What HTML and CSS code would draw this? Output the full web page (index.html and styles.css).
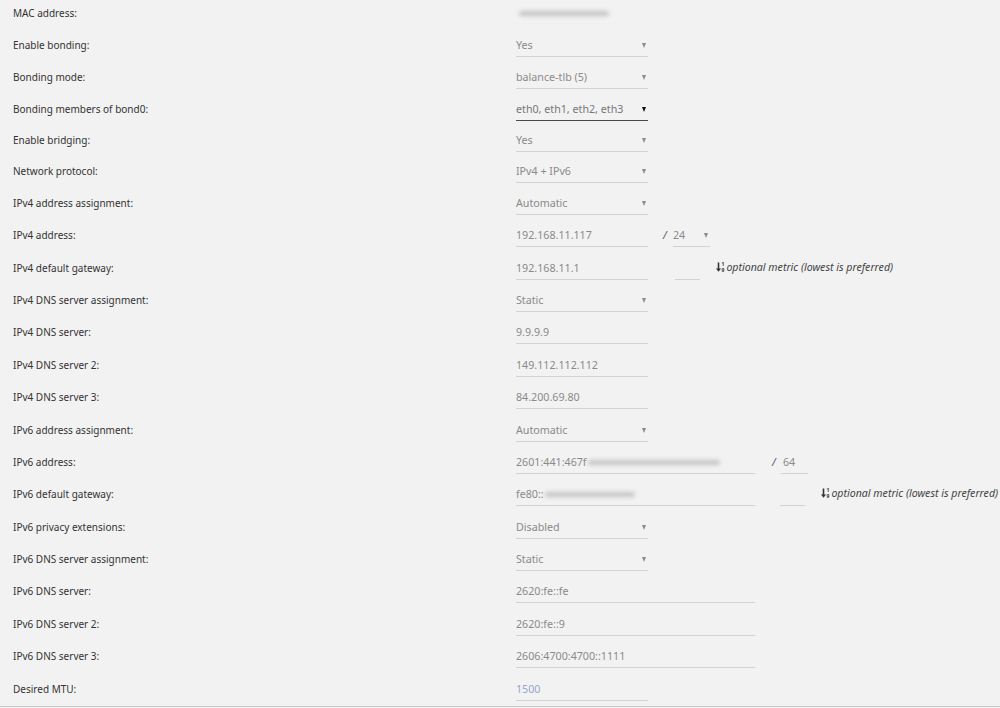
FILE: index.html
```html
<!DOCTYPE html>
<html>
<head>
<meta charset="utf-8">
<link rel="stylesheet" href="styles.css">
</head>
<body>
<div class="form">
  <div class="row"><div class="label">MAC address:</div><div class="plain"><span class="blur blur-mac"></span></div></div>
  <div class="row"><div class="label">Enable bonding:</div><div class="field sel">Yes<span class="caret"></span></div></div>
  <div class="row"><div class="label">Bonding mode:</div><div class="field sel">balance-tlb (5)<span class="caret"></span></div></div>
  <div class="row r31"><div class="label">Bonding members of bond0:</div><div class="field sel active">eth0, eth1, eth2, eth3<span class="caret"></span></div></div>
  <div class="row r31"><div class="label">Enable bridging:</div><div class="field sel">Yes<span class="caret"></span></div></div>
  <div class="row"><div class="label">Network protocol:</div><div class="field sel">IPv4 + IPv6<span class="caret"></span></div></div>
  <div class="row"><div class="label">IPv4 address assignment:</div><div class="field sel">Automatic<span class="caret"></span></div></div>
  <div class="row r33"><div class="label">IPv4 address:</div><div class="field">192.168.11.117</div><span class="slash s4">/</span><div class="field sel prefix4">24<span class="caret"></span></div></div>
  <div class="row"><div class="label">IPv4 default gateway:</div><div class="field">192.168.11.1</div><div class="field metric4"></div><div class="hint h4"><span class="sorticon"><svg width="5" height="10" viewBox="0 0 5 10"><path d="M2.5 0.5V8" stroke="#333" stroke-width="1.6"/><path d="M0 6.5h5L2.5 9.8z" fill="#333"/></svg><span class="digits"><span>1</span><span>9</span></span></span><i>optional metric (lowest is preferred)</i></div></div>
  <div class="row"><div class="label">IPv4 DNS server assignment:</div><div class="field sel">Static<span class="caret"></span></div></div>
  <div class="row r33"><div class="label">IPv4 DNS server:</div><div class="field">9.9.9.9</div></div>
  <div class="row"><div class="label">IPv4 DNS server 2:</div><div class="field">149.112.112.112</div></div>
  <div class="row r33"><div class="label">IPv4 DNS server 3:</div><div class="field">84.200.69.80</div></div>
  <div class="row"><div class="label">IPv6 address assignment:</div><div class="field sel">Automatic<span class="caret"></span></div></div>
  <div class="row"><div class="label">IPv6 address:</div><div class="field wide">2601:441:467f<span class="blur blur-v6"></span></div><span class="slash s6">/</span><div class="field prefix6">64</div></div>
  <div class="row r33"><div class="label">IPv6 default gateway:</div><div class="field wide">fe80::<span class="blur blur-gw"></span></div><div class="field metric6"></div><div class="hint h6"><span class="sorticon"><svg width="5" height="10" viewBox="0 0 5 10"><path d="M2.5 0.5V8" stroke="#333" stroke-width="1.6"/><path d="M0 6.5h5L2.5 9.8z" fill="#333"/></svg><span class="digits"><span>1</span><span>9</span></span></span><i>optional metric (lowest is preferred)</i></div></div>
  <div class="row"><div class="label">IPv6 privacy extensions:</div><div class="field sel">Disabled<span class="caret"></span></div></div>
  <div class="row"><div class="label">IPv6 DNS server assignment:</div><div class="field sel">Static<span class="caret"></span></div></div>
  <div class="row r33"><div class="label">IPv6 DNS server:</div><div class="field wide">2620:fe::fe</div></div>
  <div class="row"><div class="label">IPv6 DNS server 2:</div><div class="field wide">2620:fe::9</div></div>
  <div class="row r33"><div class="label">IPv6 DNS server 3:</div><div class="field wide">2606:4700:4700::1111</div></div>
  <div class="row"><div class="label">Desired MTU:</div><div class="field placeholder">1500</div></div>
</div>
</body>
</html>
```
FILE: styles.css
```css
html, body {
  margin: 0;
  padding: 0;
  background: #f2f2f2;
  height: 708px;
  overflow: hidden;
}
body {
  font-family: "Noto Sans", "Open Sans", sans-serif;
  font-size: 10.5px;
  color: #333;
}
.form {
  border-bottom: 1px solid #c9c9c9;
  box-sizing: border-box;
  height: 707px;
}
.row {
  display: flex;
  align-items: flex-start;
  height: 32px;
  padding-top: 2px;
  box-sizing: border-box;
  padding-left: 13px;
}
.row.r31 { height: 31px; }
.row.r33 { height: 33px; }
.label {
  width: 503px;
  flex: none;
  padding-top: 4px;
  line-height: 14px;
  font-size: 10px;
  color: #333;
}
.plain {
  padding-top: 4px;
  line-height: 14px;
  height: 14px;
  display: flex;
  align-items: center;
}
.field {
  position: relative;
  width: 132px;
  flex: none;
  box-sizing: border-box;
  height: 23px;
  padding-top: 4px;
  line-height: 14px;
  font-size: 10.7px;
  color: #8a8a8a;
  border-bottom: 1px solid #d2d2d2;
  display: flex;
  align-items: flex-start;
  white-space: nowrap;
}
.field.wide { width: 239px; }
.field.active { border-bottom-color: #4a4a4a; color: #777; }
.field.active .caret { border-top-color: #111; }
.caret {
  position: absolute;
  right: 2px;
  top: 9px;
  width: 0;
  height: 0;
  border-left: 2.5px solid transparent;
  border-right: 2.5px solid transparent;
  border-top: 5px solid #8a8a8a;
}
.placeholder { color: #98a6cf; }
.slash {
  line-height: 14px;
  padding-top: 4px;
  color: #555;
  font-style: italic;
}
.s4 { margin-left: 15px; width: 10px; }
.prefix4 { width: 37px; }
.s6 { margin-left: 17px; width: 9px; }
.prefix6 { width: 27px; padding-left: 2px; margin-left: 0; }
.metric4 { width: 25px; margin-left: 27px; }
.metric6 { width: 25px; margin-left: 25px; }
.hint {
  display: flex;
  align-items: center;
  padding-top: 3px;
  line-height: 14px;
  font-size: 10.6px;
  color: #444;
  white-space: nowrap;
}
.h4 { margin-left: 16px; }
.h6 { margin-left: 16px; }
.hint i { font-style: italic; margin-left: 2px; }
.sorticon {
  display: inline-flex;
  align-items: center;
}
.digits {
  display: inline-flex;
  flex-direction: column;
  font-size: 5px;
  line-height: 6px;
  font-weight: bold;
  margin-left: 0.5px;
  color: #333;
}
.blur {
  display: inline-block;
  height: 5px;
  border-radius: 3px;
  background: #c4c4c4;
  filter: blur(2px);
  margin-top: 5px;
}
.blur-mac { width: 90px; margin-left: 3px; margin-top: 0; }
.blur-v6 { width: 132px; margin-left: 1px; }
.blur-gw { width: 90px; margin-left: 1px; }
```
